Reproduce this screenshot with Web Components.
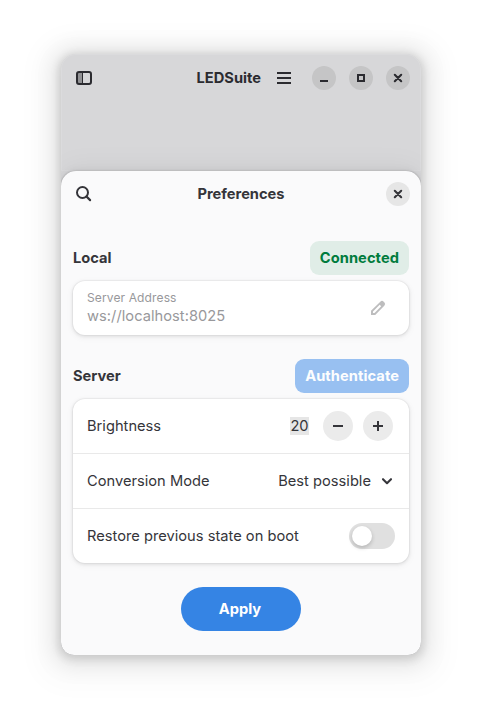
<!DOCTYPE html>
<html lang="en">
<head>
<meta charset="utf-8">
<title>LEDSuite Preferences</title>
<style>
html, body { margin: 0; height: 100%; }
body { background: #fff; overflow: hidden; font: 400 14.67px/20px Inter, "Noto Sans", sans-serif; color: #35353a; -webkit-font-smoothing: antialiased; }
</style>
</head>
<body>
<led-window></led-window>
<script>
const define = (name, html) => {
  const t = document.createElement('template');
  t.innerHTML = html;
  customElements.define(name, class extends HTMLElement {
    constructor() {
      super();
      this.attachShadow({ mode: 'open' }).append(t.content.cloneNode(true));
    }
  });
};

const icons = {
  sidebar: '<path d="M2 3h4v10H2z" fill="currentColor" opacity=".4"/><path d="M6.5 2v12" stroke="currentColor"/><rect x="1" y="2" width="14" height="12" rx="2" fill="none" stroke="currentColor" stroke-width="2"/>',
  menu: '<path d="M1 2h14v2H1zM1 7h14v2H1zM1 12h14v2H1z" fill="currentColor"/>',
  minimize: '<path d="M4 10h8v2H4z" fill="currentColor"/>',
  maximize: '<path d="M5 5h6v6H5z" fill="none" stroke="currentColor" stroke-width="2"/>',
  close: '<path d="M4.8 4.8l6.4 6.4M11.2 4.8l-6.4 6.4" stroke="currentColor" stroke-width="2.1" stroke-linecap="round"/>',
  search: '<circle cx="6.5" cy="6.5" r="5.5" fill="none" stroke="currentColor" stroke-width="2"/><path d="M10.5 10.5l3.6 3.6" stroke="currentColor" stroke-width="2.2" stroke-linecap="round"/>',
  pencil: '<path fill-rule="evenodd" d="M1 15v-4.2L10.3 1.7a2.4 2.4 0 0 1 3.4 0l.6.6a2.4 2.4 0 0 1 0 3.4L5.2 15zM3 12.9h1.5l6.7-6.7-1.5-1.5L3 11.4z" fill="currentColor"/>',
  minus: '<path d="M3 7h10v2H3z" fill="currentColor"/>',
  plus: '<path d="M7 3h2v4h4v2H9v4H7V9H3V7h4z" fill="currentColor"/>',
  down: '<path d="M4 6.2l4 4 4-4" fill="none" stroke="currentColor" stroke-width="2.1" stroke-linecap="round" stroke-linejoin="round"/>'
};

customElements.define('led-icon', class extends HTMLElement {
  constructor() {
    super();
    this.attachShadow({ mode: 'open' });
  }
  connectedCallback() {
    this.shadowRoot.innerHTML = `<style>:host{display:block;width:16px;height:16px;flex:none}svg{display:block;overflow:visible}</style><svg width="16" height="16" viewBox="0 0 16 16">${icons[this.getAttribute('name')]}</svg>`;
  }
});

define('led-round', `<style>
:host{display:grid;place-items:center;width:var(--size,24px);height:var(--size,24px);border-radius:50%;background:var(--round,#e6e6e6);flex:none}
</style><slot></slot>`);

define('led-header', `<style>
:host{display:grid;grid-template-columns:1fr auto 1fr;align-items:center;height:46px;padding:0 11px 0 15px}
.title{font-weight:700;text-align:center;margin-right:4px}
:host([controls]){grid-template-columns:1fr auto auto}
:host([controls]) .title{margin-right:15px}
.end{display:flex;align-items:center;justify-content:flex-end;gap:13px}
</style><slot name="start"></slot><div class="title"><slot></slot></div><div class="end"><slot name="end"></slot></div>`);

define('led-badge', `<style>
:host{display:flex;align-items:center;height:34px;padding:0 10px;box-sizing:border-box;border-radius:9px;font-weight:700;letter-spacing:.07px}
:host([kind=success]){background:#e0ede7;color:#007c3d}
:host([kind=action]){background:#98c0f1;color:#fcfdfe}
</style><slot></slot>`);

define('led-group', `<style>
:host{display:flex;flex-direction:column;gap:6px}
header{display:flex;align-items:center;justify-content:space-between;font-weight:700;height:34px}
.card{display:flex;flex-direction:column;background:#fff;border-radius:12px;box-shadow:0 0 0 1px rgba(0,0,6,.03),0 1px 3px 1px rgba(0,0,6,.07),0 2px 6px 2px rgba(0,0,6,.03)}
</style><header><slot name="title"></slot><slot name="suffix"></slot></header><div class="card"><slot></slot></div>`);

define('led-row', `<style>
:host{display:flex;align-items:center;justify-content:space-between;height:54px;padding:0 14px;box-sizing:border-box;letter-spacing:.01px}
:host([divided]){height:55px;border-bottom:1px solid #e9e9e9}
.end{display:flex;align-items:center}
</style><slot></slot><div class="end"><slot name="end"></slot></div>`);

define('led-entry', `<style>
:host{display:flex;flex-direction:column;color:#98989b}
small{font-size:12.03px;line-height:16px;letter-spacing:.12px}
span{line-height:20px;letter-spacing:.04px}
</style><small><slot name="label"></slot></small><span><slot></slot></span>`);

define('led-spin', `<style>
:host{display:flex;align-items:center;gap:10px;--size:30px;--round:#ebebeb;margin-right:2px}
.value{background:#e6e6e6;height:18px;line-height:18px;width:19px;text-align:center;margin-right:4px}
</style><span class="value"><slot></slot></span><led-round><led-icon name="minus"></led-icon></led-round><led-round><led-icon name="plus"></led-icon></led-round>`);

define('led-select', `<style>
:host{display:flex;align-items:center;gap:8px}
</style><span><slot></slot></span><led-icon name="down"></led-icon>`);

define('led-switch', `<style>
:host{display:flex;align-items:center;width:46px;height:26px;box-sizing:border-box;padding:3px;border-radius:13px;background:#e0e0e0}
i{width:20px;height:20px;border-radius:50%;background:#fff;box-shadow:0 2px 4px rgba(0,0,6,.2)}
</style><i></i>`);

define('led-button', `<style>
:host{display:grid;place-items:center;align-self:center;width:120px;height:44px;border-radius:22px;background:#3584e4;color:#fff;font-weight:700;padding-right:2px;box-sizing:border-box}
</style><slot></slot>`);

define('led-sheet', `<style>
:host{display:flex;flex-direction:column;flex:1;background:#fafafb;border-radius:15px 15px 13px 13px;box-shadow:0 0 2px rgba(0,0,6,.3),0 -1px 8px rgba(0,0,6,.05),0 -4px 28px rgba(0,0,6,.05)}
main{display:flex;flex-direction:column;gap:24px;padding:24px 12px}
</style>
<led-header><led-icon slot="start" name="search"></led-icon>Preferences<led-round slot="end"><led-icon name="close"></led-icon></led-round></led-header>
<main>
<led-group><span slot="title">Local</span><led-badge slot="suffix" kind="success">Connected</led-badge>
<led-row><led-entry><span slot="label">Server Address</span>ws://localhost:8025</led-entry><led-icon slot="end" name="pencil" style="color:#bdbdbe;margin-right:9px"></led-icon></led-row></led-group>
<led-group><span slot="title">Server</span><led-badge slot="suffix" kind="action">Authenticate</led-badge>
<led-row divided>Brightness<led-spin slot="end">20</led-spin></led-row>
<led-row divided>Conversion Mode<led-select slot="end">Best possible</led-select></led-row>
<led-row>Restore previous state on boot<led-switch slot="end"></led-switch></led-row></led-group>
<led-button>Apply</led-button>
</main>`);

define('led-window', `<style>
:host{display:flex;box-sizing:border-box;height:722px;padding:54px 61px 67px}
.frame{display:flex;flex-direction:column;flex:1;border-radius:15px 15px 13px 13px;background:#d7d7d9;box-shadow:0 2px 8px 2px rgba(0,0,0,.13),0 3px 20px 10px rgba(0,0,0,.09),0 6px 20px 30px rgba(0,0,0,.015)}
.clip{display:flex;flex-direction:column;flex:1;overflow:hidden;border-radius:inherit}
.back{height:117px;padding-top:1px;box-sizing:border-box;--round:#c5c5c6;color:#2b2b30;border-radius:15px 15px 0 0;box-shadow:inset 0 0 0 1px rgba(255,255,255,.12)}
.menu{margin-right:7px}
</style>
<div class="frame"><div class="clip"><div class="back">
<led-header controls><led-icon slot="start" name="sidebar"></led-icon><span class="name">LEDSuite</span><led-icon class="menu" slot="end" name="menu"></led-icon><led-round slot="end"><led-icon name="minimize"></led-icon></led-round><led-round slot="end"><led-icon name="maximize"></led-icon></led-round><led-round slot="end"><led-icon name="close"></led-icon></led-round></led-header>
</div><led-sheet></led-sheet></div></div>`);
</script>
</body>
</html>
